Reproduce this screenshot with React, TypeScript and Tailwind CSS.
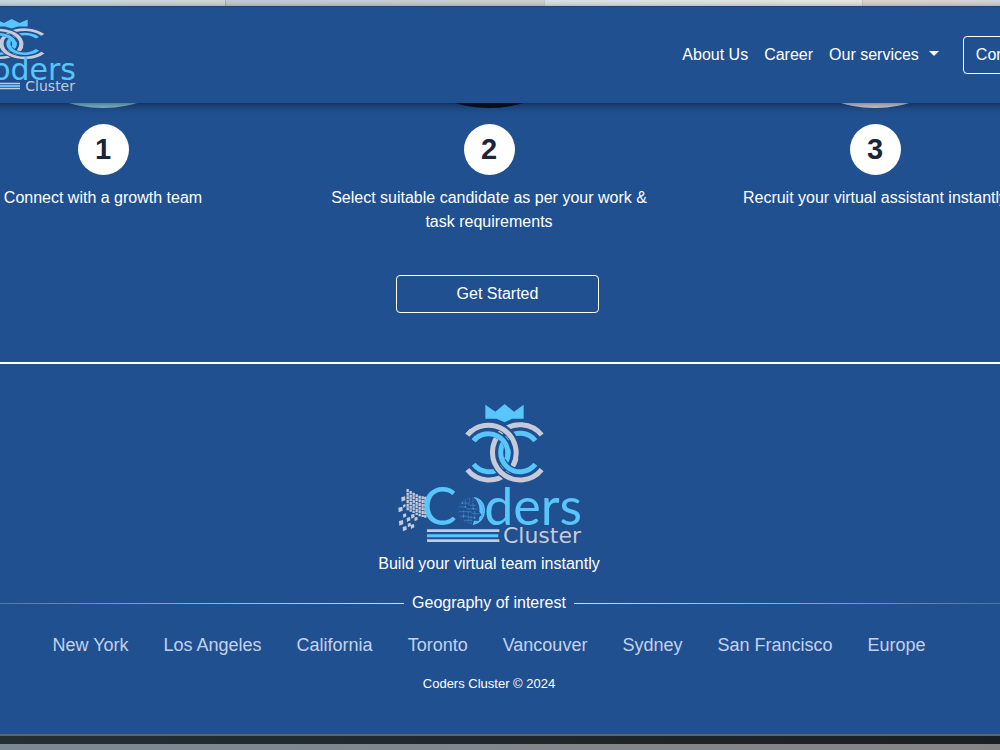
import clsx from 'clsx';

const steps = [
  { id: 1, text: 'Connect with a growth team', photo: 'bg-[#86c6e0]' },
  { id: 2, text: 'Select suitable candidate as per your work & task requirements', photo: 'bg-[#101223]' },
  { id: 3, text: 'Recruit your virtual assistant instantly', photo: 'bg-[#dedbdc]' },
];

const cities = ['New York', 'Los Angeles', 'California', 'Toronto', 'Vancouver', 'Sydney', 'San Francisco', 'Europe'];

// x, y, size of the loose squares flying off the letter C
const pixels = [
  [64, 305, 11], [55, 336, 12], [57, 376, 12], [68, 394, 11], [69, 356, 9], [80, 367, 10],
  [83, 384, 9], [92, 388, 10], [93, 357, 10], [103, 366, 9], [69, 328, 7],
];

// columns of the solid block: x, top, bottom
const columns = [
  [79, 282, 346], [88, 288, 350], [97, 293, 354], [106, 298, 360], [115, 302, 364], [124, 304, 366], [132, 305, 368],
];

function Emblem() {
  return (
    <g fill="none">
      <path d="M316 29 L346 50 L374 27 L402 50 L431 29 V71 H396 L374 82 L350 71 H316 Z" fill="#58c6fb" />
      <path d="M262 120 A83 83 0 1 1 262 224" stroke="#c5cbd9" strokeWidth="15" />
      <path d="M281 137 A58 58 0 1 1 281 208" stroke="#58c6fb" strokeWidth="15" />
      <path d="M485 120 A83 83 0 1 0 485 224" stroke="#205090" strokeWidth="24" />
      <path d="M466 137 A58 58 0 1 0 466 208" stroke="#205090" strokeWidth="22" />
      <path d="M485 120 A83 83 0 1 0 485 224" stroke="#c5cbd9" strokeWidth="15" />
      <path d="M466 137 A58 58 0 1 0 466 208" stroke="#58c6fb" strokeWidth="15" />
      <path d="M275 107 A83 83 0 0 1 408 190" stroke="#205090" strokeWidth="24" />
      <path d="M290 128 A58 58 0 0 1 384 162" stroke="#205090" strokeWidth="20" />
      <path d="M262 120 A83 83 0 0 1 400 210" stroke="#c5cbd9" strokeWidth="15" />
      <path d="M281 137 A58 58 0 0 1 380 194" stroke="#58c6fb" strokeWidth="15" />
    </g>
  );
}

function FooterLogo() {
  return (
    <svg className="h-[141px] w-[186px]" viewBox="16 9 186 141" role="img" aria-label="Coders Cluster">
      <g transform="scale(0.33333)">
        <Emblem />
        <g fill="#c5cbd9">
          {pixels.map(([x, y, s]) => (
            <path key={`${x}-${y}`} d={`M${x} ${y + 2} l${s} -3 l1 ${s} l-${s} 5 Z`} />
          ))}
          {columns.map(([x, top, bottom]) => (
            <path key={x} d={`M${x + 4} ${top} V${bottom}`} stroke="#c5cbd9" strokeWidth="7" strokeDasharray="9 2" />
          ))}
        </g>
        {/* half globe, half letter o */}
        <path d="M280 306 C304 309 315 326 315 346 C315 368 302 387 278 390 L282 377 L296 378 L298 366 L305 360 L298 350 C300 332 294 318 280 306 Z" fill="#58c6fb" />
        <g fill="none" stroke="#3f91cd" strokeWidth="2">
          <circle cx="272" cy="347" r="38" strokeDasharray="3 4" stroke="#3578b8" />
          <path d="M244 324 H263 L270 331 H289 M238 336 H256 L262 342 H292 M237 350 H272 L279 356 H298 M241 363 H258 L265 368 H288 M252 376 H278" />
          <path d="M256 313 V334 M268 309 V325 M279 314 V340 M251 345 V370 M265 350 V383 M284 348 V371 M273 362 V388" strokeDasharray="7 3" />
        </g>
        <g fill="#58aee5">
          <circle cx="247" cy="324" r="2" />
          <circle cx="256" cy="335" r="2" />
          <circle cx="280" cy="341" r="2" />
          <circle cx="251" cy="364" r="2" />
          <circle cx="284" cy="369" r="2" />
        </g>
        <path d="M141 407 H358" stroke="#c5cbd9" strokeWidth="8" />
        <path d="M141 422 H355" stroke="#58c6fb" strokeWidth="9" />
        <path d="M141 437 H358" stroke="#c5cbd9" strokeWidth="8" />
      </g>
      <text x="42" y="130" fontSize="52" fill="#58c6fb" className="font-['Lato',sans-serif]">C</text>
      <text x="202" y="130" fontSize="52" textAnchor="end" fill="#58c6fb" className="font-['Lato',sans-serif]">ders</text>
      <text x="201" y="148" fontSize="22" textAnchor="end" fill="#c5cbd9" className="font-['DejaVu_Sans',sans-serif]">Cluster</text>
    </svg>
  );
}

function HeaderLogo() {
  return (
    <svg className="h-[74px] w-[166px]" viewBox="-90 18 166 74" role="img" aria-label="Coders Cluster">
      <g transform="translate(-93 14.5) scale(0.28 0.17)">
        <Emblem />
      </g>
      <text x="76" y="80" fontSize="30" textAnchor="end" fill="#58c6fb" className="font-['DejaVu_Sans',sans-serif]">Coders</text>
      <path d="M-70 83.5 H20 M-70 88.5 H20" stroke="#c5cbd9" strokeWidth="1.5" />
      <path d="M-70 86 H20" stroke="#58c6fb" strokeWidth="2" />
      <text x="75" y="91" fontSize="14" textAnchor="end" fill="#c5cbd9" className="font-['DejaVu_Sans',sans-serif]">Cluster</text>
    </svg>
  );
}

function Header() {
  return (
    <header className="relative z-10 flex h-[97px] items-center justify-between border-t border-[#1c4478] bg-[#205090] shadow-[0_2px_8px_rgba(0,0,0,0.5)]">
      <HeaderLogo />
      <nav className="flex items-center gap-4 text-white">
        <a href="#about">About Us</a>
        <a href="#career">Career</a>
        <button type="button" className="mr-2 flex items-center gap-[10px]">
          Our services
          <svg className="mb-1 h-[5px] w-[10px]" viewBox="0 0 10 5" fill="currentColor" aria-hidden="true">
            <path d="M0 0 H10 L5 5 Z" />
          </svg>
        </button>
        <button type="button" className="h-[38px] rounded border border-white px-3">Contact Us</button>
      </nav>
    </header>
  );
}

export default function App() {
  return (
    <div className="overflow-hidden bg-[#205090] font-['Liberation_Sans',Arial,sans-serif] text-base text-white">
      {/* browser tabs */}
      <div className="flex h-1.5">
        <div className="w-[226px] border-r border-[#a3afba] bg-linear-to-r from-[#c9d9e4] to-[#d3dade]" />
        <div className="w-[319px] border-r border-[#c5cbd2] bg-linear-to-r from-[#c3ced9] to-[#d1d2d7]" />
        <div className="w-[318px] border-r border-[#c8c8ca] bg-linear-to-r from-[#dce3ec] to-[#e8e8e9]" />
        <div className="flex-1 bg-linear-to-r from-[#ded6d5] to-[#d5d7df]" />
      </div>

      <div className="-mr-[68px] -ml-[90px]">
        <Header />

        <main>
          <div className="grid grid-cols-3">
            {steps.map((step) => (
              <div key={step.id} className="flex flex-col items-center">
                <div className="flex h-[5px] w-full items-end justify-center overflow-hidden">
                  <div className={clsx('size-60 shrink-0 rounded-full', step.photo)} />
                </div>
                <div className="mt-4 flex size-[51px] items-center justify-center rounded-full bg-white text-[29px] font-bold text-[#1c2438]">
                  {step.id}
                </div>
                <p className="mt-[11px] max-w-[340px] text-center leading-6">{step.text}</p>
              </div>
            ))}
          </div>
          <div className="mt-[41px] flex justify-center pl-[17px]">
            <button type="button" className="h-[38px] w-[203px] rounded border border-white">Get Started</button>
          </div>
        </main>

        <footer className="mt-[49px] flex flex-col items-center border-t-2 border-white pt-10 pb-[38px]">
          <FooterLogo />
          <p className="mt-[7px] leading-6">Build your virtual team instantly</p>
          <div className="mt-[15px] flex w-full items-center gap-2 leading-6">
            <div className="h-px flex-1 bg-linear-to-r from-white/10 to-white/80" />
            <h2>Geography of interest</h2>
            <div className="h-px flex-1 bg-linear-to-l from-white/10 to-white/80" />
          </div>
          <ul className="mt-4 flex gap-[35px] text-lg text-[#c3d3ef]">
            {cities.map((city) => (
              <li key={city}>{city}</li>
            ))}
          </ul>
          <p className="mt-[13px] text-[13px] leading-6">Coders Cluster © 2024</p>
        </footer>
      </div>

      {/* edge of the laptop screen */}
      <div className="h-[10px] border-t-2 border-[#59657c] bg-linear-to-r from-[#262e32] to-[#1b1f21]" />
      <div className="h-1.5 bg-linear-to-r from-[#7b8994] to-[#858485]" />
    </div>
  );
}
